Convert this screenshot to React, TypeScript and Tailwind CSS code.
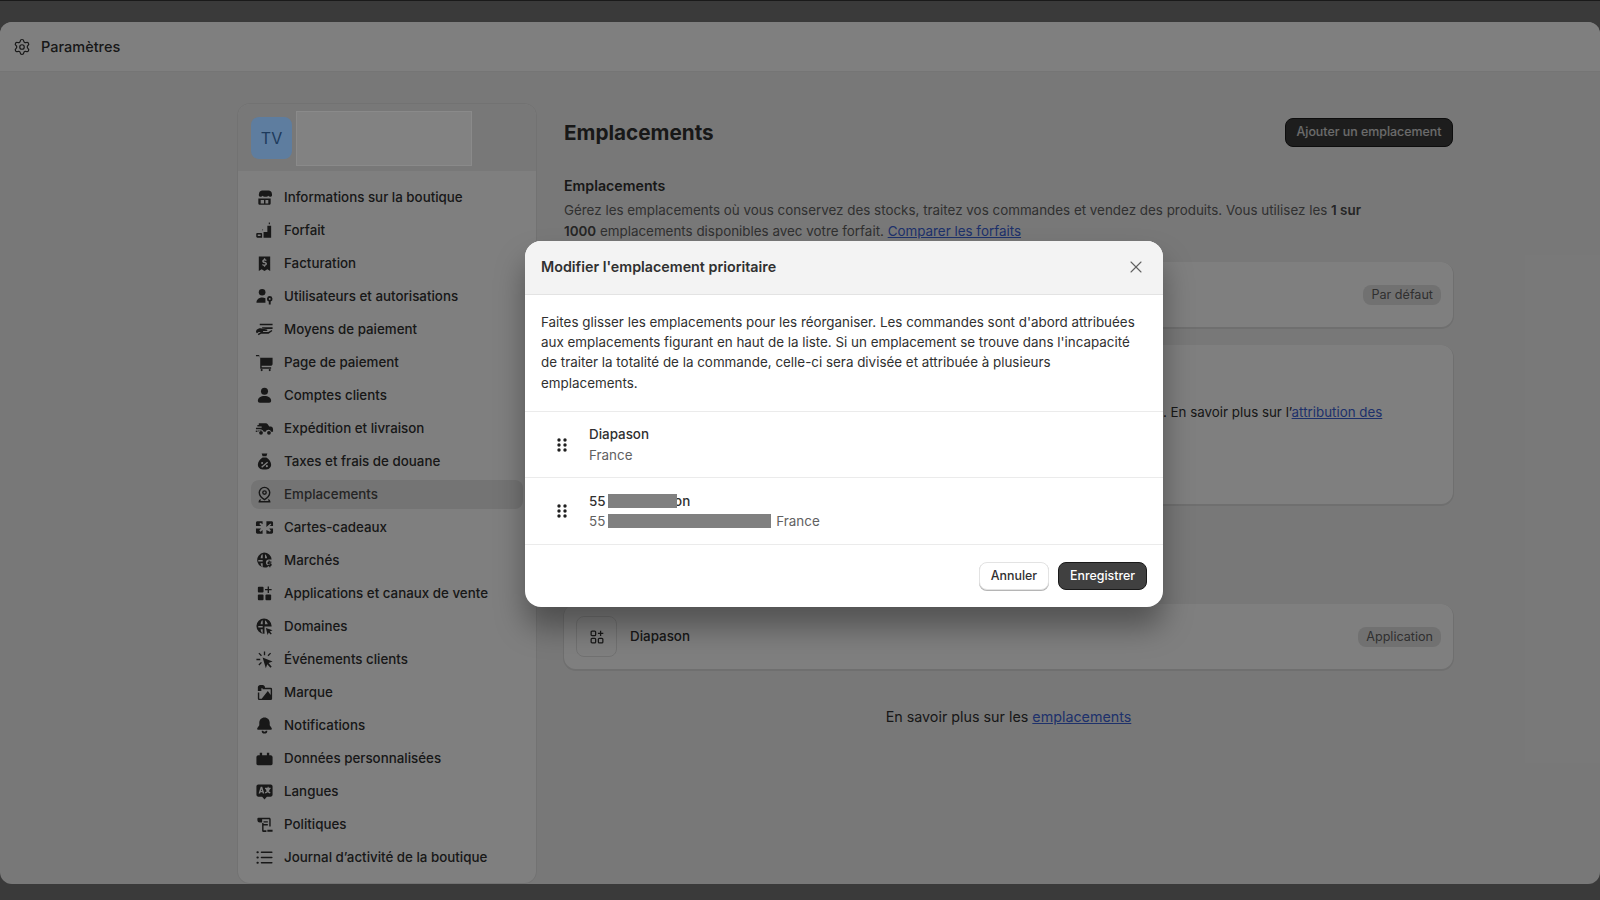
import { Settings, X } from "lucide-react";
import type { ReactNode } from "react";

const Ico = ({ children }: { children: ReactNode }) => (
  <svg viewBox="0 0 20 20" fill="currentColor" className="w-[19px] h-[19px] shrink-0 text-[#303030]">
    {children}
  </svg>
);

const nav: { label: string; icon: ReactNode; active?: boolean }[] = [
  {
    label: "Informations sur la boutique",
    icon: (
      <>
        <path d="M5.5 2.5h9c1.5 0 2.600 1 3 2.300l.5 2.200c.2 1.200-.8 2.200-2 2.200-.9 0-1.600-.4-2-1-.5.6-1.200 1-2 1h-2c-.8 0-1.500-.4-2-1-.4.6-1.100 1-2 1-1.200 0-2.200-1-2-2.200l.5-2.200c.4-1.300 1.500-2.300 3-2.300z" />
        <path fillRule="evenodd" d="M3.500 11h13v5c0 1-.7 1.700-1.700 1.700H5.200c-1 0-1.700-.7-1.700-1.700v-5zm6 1.500H6v3.700h3.500v-3.700zm1.500 0v3.700h3v-3.700h-3z" />
      </>
    ),
  },
  {
    label: "Forfait",
    icon: (
      <>
        <path d="M14.500 1.500h1.200v1.800h-1.200z" />
        <path d="M13 5h4v12.500H9v-6h4V5z" />
        <path d="M7.500 9h1v.8h-1z" />
        <path fillRule="evenodd" d="M2.500 12.500h4a1 1 0 0 1 1 1v4h-5a1.200 1.200 0 0 1-1.200-1.200v-2.600c0-.7.5-1.200 1.200-1.200zm.4 1.600v1.800h3v-1.800h-3z" />
      </>
    ),
  },
  {
    label: "Facturation",
    icon: (
      <path
        fillRule="evenodd"
        d="M4 2.500h12v15.500l-3-2-3 2-3-2-3 2V2.500zm6.700 2H9.400v1.100C8.300 5.900 7.600 6.600 7.600 7.600c0 1.200 1 1.700 2.100 2 .9.2 1.200.4 1.200.8 0 .4-.4.7-1 .7-.6 0-1.200-.3-1.700-.7l-.8 1.100c.5.5 1.200.8 2 1v1h1.300v-1.100c1.100-.3 1.900-1 1.900-2.100 0-1.300-1-1.800-2.200-2.100-.8-.2-1.100-.4-1.100-.7 0-.4.4-.6.9-.6.5 0 1 .2 1.400.5l.7-1.100c-.4-.3-1-.6-1.600-.7V4.500z"
      />
    ),
  },
  {
    label: "Utilisateurs et autorisations",
    icon: (
      <>
        <circle cx="7.5" cy="5.5" r="3.5" />
        <path d="M1.500 16.500c0-3.300 2.600-5.500 6-5.500 1.300 0 2.500.3 3.500.9v4.600H1.500z" />
        <path fillRule="evenodd" d="M15.500 9.500a3 3 0 0 1 1 5.800V18.500h-2v-3.200a3 3 0 0 1 1-5.800zm0 2a1 1 0 1 0 0 2 1 1 0 0 0 0-2z" />
      </>
    ),
  },
  {
    label: "Moyens de paiement",
    icon: (
      <>
        <path d="M5 4h13.500v1.600H5zM7.500 7.500h11v2h-7L7.500 9z" />
        <path d="M1.500 10.500c1.500-1.400 3.500-2 5.500-1.600l5.500 1c.9.2.8 1.600-.2 1.600H8.500v1h5.500l3.500-2 .8 1.200-4 2.800H6.500l-2.800 1.500-.8-1.300 3.300-2.200H4l-2 1.400-1-1.200z" />
      </>
    ),
  },
  {
    label: "Page de paiement",
    icon: (
      <>
        <path d="M1 2h2.300c.8 0 1.400.5 1.600 1.300L5.200 5H18.500v6.500c0 1.100-.9 2-2 2H7v1.500h10v1.500H5.500V5.200L5 3.500H1V2z" />
        <circle cx="7" cy="18" r="1.1" />
        <circle cx="15.5" cy="18" r="1.1" />
      </>
    ),
  },
  {
    label: "Comptes clients",
    icon: (
      <>
        <circle cx="10" cy="5.5" r="3.7" />
        <path d="M3 15.500c0-3 3-5 7-5s7 2 7 5c0 1.200-.8 2-2 2H5c-1.200 0-2-.8-2-2z" />
      </>
    ),
  },
  {
    label: "Expédition et livraison",
    icon: (
      <>
        <path d="M4 4.500h7.500c.8 0 1.500.4 1.900 1l1.600 2.500h1.500c1.500 0 2.500 1.300 2.500 2.800V13.500h-2a3 3 0 0 0-5.800 0H9.200a3 3 0 0 0-5.800 0H3v-1.300h4V10.800H1V9.300h6V7.800H2.500V6.300H4V4.500z" />
        <circle cx="6.3" cy="14.5" r="2" />
        <circle cx="14.7" cy="14.5" r="2" />
        <path d="M.8 12.200H2.500v1.400H.8z" />
      </>
    ),
  },
  {
    label: "Taxes et frais de douane",
    icon: (
      <path
        fillRule="evenodd"
        d="M7 1.500h6l-1 3H8l-1-3zM8 5.800h4c3 1.800 5 4.700 5 7.500 0 3-2.500 5.200-7 5.200s-7-2.200-7-5.200c0-2.800 2-5.700 5-7.500zm-.5 4.700a1.100 1.100 0 1 0 0 2.200 1.100 1.100 0 0 0 0-2.200zm5 3.300a1.100 1.100 0 1 0 0 2.200 1.100 1.100 0 0 0 0-2.200zm.3-3.600L6.500 15.500l1 1 6.300-5.300-1-1z"
      />
    ),
  },
  {
    label: "Emplacements",
    active: true,
    icon: (
      <g fill="none" stroke="currentColor" strokeWidth="1.5">
        <path d="M10 15.500c-3-1.800-5.500-4-5.500-7.500a5.500 5.500 0 0 1 11 0c0 3.500-2.500 5.700-5.500 7.500z" />
        <circle cx="10" cy="8" r="1.8" />
        <path d="M6 15.500c-1 .5-1.500 1-1.500 2.200h11c0-1.200-.5-1.700-1.500-2.200" />
      </g>
    ),
  },
  {
    label: "Cartes-cadeaux",
    icon: (
      <path
        fillRule="evenodd"
        d="M2.500 3.500h15c.8 0 1.500.7 1.500 1.500v3.500h-3.500l1.700-1.700-1-1L12 9.500V3.500h-4v3L5.800 5 4.500 6.300l2 2.200H1V5c0-.8.7-1.500 1.500-1.500zM1 11h5.500l-2 2.200 1.300 1.300L8 12.500v4H2.500C1.700 16.500 1 15.800 1 15v-4zm11 1.500l3.700 2 1-1L15 11h4v4c0 .8-.7 1.500-1.500 1.500H12v-4z"
      />
    ),
  },
  {
    label: "Marchés",
    icon: (
      <>
        <path
          fillRule="evenodd"
          d="M9.500 1.500a8 8 0 0 1 8 7.500h-3.200c-1.400 0-2.800 1.300-2.800 3 0 1.500.8 2.500 2 3v1.800a8 8 0 1 1-4-15.300zM7 4C6.400 5 6 6.200 5.900 7.500h2.200V3.400C7.700 3.500 7.300 3.700 7 4zm3.500-.6v4.100h2.200C12.500 6 12 4.500 10.500 3.400zM3.500 9.500a6 6 0 0 0 0 1.500h4.600V9.500H3.500zm2.400 3.500c.1 1.300.5 2.500 1.100 3.400.3.2.7.4 1.100.6V13H5.900z"
        />
        <path d="M15.500 10v1.100h1.800v1.300h-2.500v.6h1.300c.9 0 1.500.6 1.500 1.400 0 .8-.5 1.300-1.300 1.500v1.100h-1.300v-1H13.200v-1.300h2.500V14.100h-1.200c-.9 0-1.500-.6-1.500-1.400s.5-1.300 1.200-1.500V10h1.300z" />
      </>
    ),
  },
  {
    label: "Applications et canaux de vente",
    icon: (
      <>
        <rect x="3" y="3" width="6" height="6" rx="1" />
        <rect x="3" y="11" width="6" height="6" rx="1" />
        <rect x="11" y="11" width="6" height="6" rx="1" />
        <path d="M13.300 2.500h1.400v2.800h2.800v1.400h-2.800v2.800h-1.400V6.700h-2.800V5.300h2.800z" />
      </>
    ),
  },
  {
    label: "Domaines",
    icon: (
      <>
        <path
          fillRule="evenodd"
          d="M9.500 1.500a8 8 0 0 1 8 8v.5h-7.500v7.500h-.5a8 8 0 0 1 0-16zM7 4C6.400 5 6 6.200 5.900 7.500h2.200V3.400C7.700 3.500 7.300 3.700 7 4zm3.500-.6v4.100h2.900C13 6 12 4.500 10.500 3.400zM3.500 9.500a6 6 0 0 0 0 1.500h4.600V9.500H3.500zm2.400 3.500c.1 1.300.5 2.500 1.100 3.400.3.2.7.4 1.100.6V13H5.900z"
        />
        <path d="M11.500 11.500l7 2.500-2.800 1.200 2 2.300-1.200 1-2-2.300-1.300 2.800z" />
      </>
    ),
  },
  {
    label: "Événements clients",
    icon: (
      <>
        <path d="M8 8l10.500 4-4.200 1.800 3.300 3.700-1.400 1.300-3.300-3.700-1.500 4.200z" />
        <path d="M9.300 1.500h1.400v4H9.300zM1.500 9.300h4v1.400h-4zM3.600 3.800l1-1 2.700 2.700-1 1zM3.600 15.200l2.700-2.700 1 1-2.700 2.700zM13.200 5.500l2.700-2.700 1 1-2.700 2.700z" />
      </>
    ),
  },
  {
    label: "Marque",
    icon: (
      <>
        <path d="M3 4.500c0-1.500 1.100-2.500 2.500-2.500H8c1.400 0 2.500 1 2.500 2.500v1h-3.800v3H3v-4z" />
        <path fillRule="evenodd" d="M8 5h8.500A1.500 1.500 0 0 1 18 6.500v10a1.500 1.500 0 0 1-1.500 1.500h-12A1.500 1.500 0 0 1 3 16.500V10h1.500v6.500H16.500v-10H8V5zm5.500 3.500l3 4v4H7l6.500-8z" />
      </>
    ),
  },
  {
    label: "Notifications",
    icon: (
      <>
        <path d="M10 1.500c3.200 0 5.500 2.500 5.500 5.500v2.800l2 2.700c.6.9 0 2-1 2H3.500c-1 0-1.600-1.100-1-2l2-2.700V7c0-3 2.300-5.500 5.500-5.500z" />
        <path d="M7 15.500h1.600a1.500 1.500 0 0 0 2.800 0H13a3 3 0 0 1-6 0z" />
      </>
    ),
  },
  {
    label: "Données personnalisées",
    icon: (
      <path d="M5 4h2.500v2.500h5V4H15v2.500h1.500c1 0 2 .9 2 2v7c0 .8-.7 1.500-1.500 1.500H3c-.8 0-1.500-.7-1.500-1.500v-7c0-1.100 1-2 2-2H5V4z" />
    ),
  },
  {
    label: "Langues",
    icon: (
      <path
        fillRule="evenodd"
        d="M3.500 2.500h13c1.100 0 2 .9 2 2v9c0 1.100-.9 2-2 2h-4L10 18.500l-2.500-3h-4c-1.100 0-2-.9-2-2v-9c0-1.100.9-2 2-2zM6 5L3.800 12h1.600l.4-1.300h2l.4 1.300h1.600L7.600 5H6zm.8 2.600l.6 1.800H6.200l.6-1.800zM13.300 5v1h-2.800v1.300h.6c.3 1 .8 1.800 1.300 2.400-.6.4-1.200.7-2 1l.5 1.300c1-.3 1.800-.8 2.500-1.300.6.5 1.400 1 2.400 1.300l.5-1.300c-.7-.2-1.300-.6-1.900-1 .6-.7 1.100-1.500 1.400-2.400h.6V6h-2V5h-1.100z"
      />
    ),
  },
  {
    label: "Politiques",
    icon: (
      <path
        fillRule="evenodd"
        d="M3.500 3H15c1 0 1.500.7 1.500 1.500V12H15V4.500H7.500V8H5A2.500 2.500 0 0 1 2.500 5.500V4c0-.6.4-1 1-1zm5.500 3.500h4.500V8H9V6.500zm0 3h4.500V11H9V9.500zM7.500 8.500H9V16h3v2H9c-.8 0-1.500-.7-1.500-1.500v-8zM13 15.500h5.500V17.500H13v-2z"
      />
    ),
  },
  {
    label: "Journal d’activité de la boutique",
    icon: (
      <>
        <rect x="1.5" y="3.5" width="2.5" height="2" rx="1" />
        <rect x="1.5" y="9" width="2.5" height="2" rx="1" />
        <rect x="1.5" y="14.5" width="2.5" height="2" rx="1" />
        <rect x="6" y="3.7" width="12.5" height="1.6" rx=".8" />
        <rect x="6" y="9.2" width="12.5" height="1.6" rx=".8" />
        <rect x="6" y="14.7" width="12.5" height="1.6" rx=".8" />
      </>
    ),
  },
];

const Grip = () => (
  <svg viewBox="0 0 12 16" fill="currentColor" className="w-[12px] h-[16px] text-[#1f1f1f]">
    <circle cx="3" cy="3" r="1.7" />
    <circle cx="9" cy="3" r="1.7" />
    <circle cx="3" cy="8" r="1.7" />
    <circle cx="9" cy="8" r="1.7" />
    <circle cx="3" cy="13" r="1.7" />
    <circle cx="9" cy="13" r="1.7" />
  </svg>
);

const Badge = ({ children }: { children: ReactNode }) => (
  <span className="inline-block h-[20px] px-[8px] rounded-[8px] bg-[#e3e3e3] text-[12.6px] leading-[20px] text-[#616161]">
    {children}
  </span>
);

const Card = ({ children, className }: { children: ReactNode; className: string }) => (
  <div className={`rounded-[12px] bg-white shadow-[0_1px_0_1px_rgba(0,0,0,0.08)] ${className}`}>{children}</div>
);

export default function App() {
  return (
    <div
      className="relative w-[1600px] h-[900px] overflow-hidden bg-[#757575] text-[13.4px] text-[#303030]"
      style={{ fontFamily: "Inter, 'Noto Sans', sans-serif" }}
    >
      <div className="h-[22px]" />
      <div className="h-[862px] bg-[#f1f1f1] rounded-[12px] overflow-hidden flex flex-col">
        <div className="h-[50px] shrink-0 bg-white border-b border-[#ebebeb] flex items-center pl-[13px] gap-[10px]">
          <Settings size={18} strokeWidth={1.6} />
          <span className="text-[14.5px] font-medium">Paramètres</span>
        </div>
        <div className="flex-1 flex pl-[238px] min-h-0">
          <aside className="w-[298px] mt-[32px] mb-[1px] bg-white rounded-[12px] shadow-[0_0_0_1px_rgba(0,0,0,0.05)] flex flex-col">
            <div className="h-[67px] bg-[#f1f1f1] rounded-t-[12px] shrink-0 flex items-center pl-[13px] pt-[1px]">
              <div className="relative z-10 w-[41px] h-[42px] rounded-[8px] bg-[#5e7d9f] flex items-center justify-center text-[#1d3a5c] text-[16px]">
                TV
              </div>
            </div>
            <nav className="flex flex-col gap-[4.5px] pt-[12px] px-[13px]">
              {nav.map((item) => (
                <div
                  key={item.label}
                  className={`h-[28.5px] shrink-0 rounded-[8px] flex items-center pl-[4px] gap-[10px] ${
                    item.active ? "bg-[#e8e8e8] text-[#4a4a4a]" : ""
                  }`}
                >
                  <Ico>{item.icon}</Ico>
                  <span className="whitespace-nowrap font-medium text-[13.35px]">{item.label}</span>
                </div>
              ))}
            </nav>
          </aside>
          <main className="w-[889px] ml-[28px] pt-[46px]">
            <div className="h-[29px] flex items-center justify-between">
              <h1 className="text-[20.7px] font-bold">Emplacements</h1>
              <button className="h-[29px] w-[168px] rounded-[8px] bg-[#3a3a3a] border border-[#1a1a1a] text-white/80 text-[12.4px] font-medium">
                Ajouter un emplacement
              </button>
            </div>
            <h2 className="mt-[29px] leading-[20px] text-[14.2px] font-semibold">Emplacements</h2>
            <p className="mt-[4px] leading-[20.5px] text-[#616161]">
              Gérez les emplacements où vous conservez des stocks, traitez vos commandes et vendez des produits. Vous
              utilisez les <b className="font-semibold text-[#4a4a4a]">1 sur</b>
              <br />
              <b className="font-semibold text-[#4a4a4a]">1000</b> emplacements disponibles avec votre forfait.{" "}
              <a className="underline text-[#3d63d6]">Comparer les forfaits</a>
            </p>
            <Card className="mt-[21px] h-[65px] flex items-center justify-end pr-[12px]">
              <Badge>Par défaut</Badge>
            </Card>
            <Card className="mt-[18px] h-[159px] pt-[57px] pl-[599px]">
              <p className="leading-[20px] whitespace-nowrap text-[13.35px]">
                . En savoir plus sur l’<a className="underline text-[#3d63d6]">attribution des</a>
              </p>
            </Card>
            <Card className="mt-[100px] h-[65px] flex items-center px-[12px]">
              <div className="w-[41px] h-[41px] rounded-[8px] border border-[#e3e3e3] flex items-center justify-center">
                <svg viewBox="0 0 20 20" fill="none" stroke="currentColor" strokeWidth="1.4" className="w-[18px] h-[18px]">
                  <rect x="3.5" y="3.5" width="5" height="5" rx="1" />
                  <rect x="3.5" y="11.5" width="5" height="5" rx="1" />
                  <rect x="11.5" y="11.5" width="5" height="5" rx="1" />
                  <path d="M14 3v6M11 6h6" />
                </svg>
              </div>
              <span className="ml-[13px] font-medium">Diapason</span>
              <span className="ml-auto">
                <Badge>Application</Badge>
              </span>
            </Card>
            <p className="mt-[38px] leading-[20px] text-center text-[14.3px]">
              En savoir plus sur les <a className="underline text-[#3d63d6]">emplacements</a>
            </p>
          </main>
        </div>
      </div>

      {/* backdrop + modal */}
      <div className="absolute inset-0 bg-black/50">
        <div className="absolute left-0 top-0 w-full h-[1px] bg-[#1a1a1a]" />
        <div className="absolute left-[296px] top-[111px] w-[176px] h-[55px] bg-[#828282] border border-[#8a8a8a]" />
        <div className="absolute left-[525px] top-[241px] w-[638px] h-[366px] rounded-[16px] bg-white overflow-hidden shadow-[0_20px_30px_rgba(0,0,0,0.35)] flex flex-col">
          <div className="h-[54px] shrink-0 bg-[#f3f3f3] border-b border-[#e3e3e3] flex items-center justify-between pl-[16px] pr-[17px] pb-[1px]">
            <span className="font-semibold text-[14.3px] text-[#303030]">Modifier l'emplacement prioritaire</span>
            <X size={20} strokeWidth={1.3} className="text-[#616161]" />
          </div>
          <p className="h-[117px] shrink-0 px-[16px] pt-[16.5px] leading-[20.4px] border-b border-[#ebebeb]">
            Faites glisser les emplacements pour les réorganiser. Les commandes sont d'abord attribuées
            <br />
            aux emplacements figurant en haut de la liste. Si un emplacement se trouve dans l'incapacité
            <br />
            de traiter la totalité de la commande, celle-ci sera divisée et attribuée à plusieurs
            <br />
            emplacements.
          </p>
          <div className="h-[66px] shrink-0 flex items-center pl-[30.5px] border-b border-[#ebebeb]">
            <Grip />
            <div className="ml-[21.5px] leading-[20.5px]">
              <div className="font-medium">Diapason</div>
              <div className="text-[#616161]">France</div>
            </div>
          </div>
          <div className="h-[67px] shrink-0 flex items-center pl-[30.5px] border-b border-[#ebebeb]">
            <Grip />
            <div className="ml-[21.5px] leading-[20.5px]">
              <div className="font-medium flex items-center">
                55
                <span className="relative z-10 ml-[2.5px] w-[69px] h-[14px] bg-[#808080]" />
                <span className="-ml-[3px]">on</span>
              </div>
              <div className="text-[#616161] flex items-center">
                55
                <span className="ml-[3px] mr-[5px] w-[163px] h-[14px] bg-[#808080]" />
                France
              </div>
            </div>
          </div>
          <div className="flex-1 flex items-center justify-end gap-[9px] pr-[16px]">
            <button className="w-[70px] h-[28.5px] rounded-[8px] bg-white border border-[#e3e3e3] shadow-[0_1px_0_#b5b5b5] text-[12.4px] font-medium">
              Annuler
            </button>
            <button className="w-[89px] h-[28.5px] rounded-[8px] bg-[#404040] border border-[#1a1a1a] text-white text-[12.4px] font-medium">
              Enregistrer
            </button>
          </div>
        </div>
      </div>
    </div>
  );
}
